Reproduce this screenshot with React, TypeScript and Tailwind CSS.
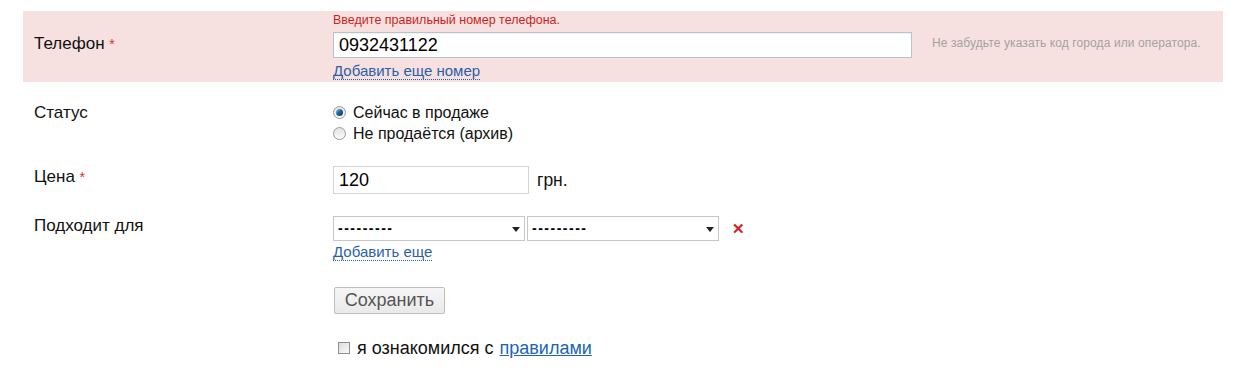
import React from "react";

function Radio({ checked }: { checked?: boolean }) {
  return (
    <span className="relative inline-flex h-[13px] w-[13px] shrink-0 items-center justify-center rounded-full border border-[#9a9a9a] bg-gradient-to-b from-[#e2e2e2] to-[#fbfbfb]">
      {checked && (
        <span className="h-[7px] w-[7px] rounded-full bg-gradient-to-br from-[#7fc4f0] via-[#1d5f95] to-[#0d3d66]" />
      )}
    </span>
  );
}

function Select() {
  return (
    <div className="relative flex h-[25px] w-[192px] items-center border border-[#c6c6c6] bg-white pl-[4px] text-[14px] font-bold text-black">
      <span className="tracking-[1.5px]">---------</span>
      <svg className="absolute right-[4px] top-[10px]" width="8" height="5" viewBox="0 0 8 5">
        <path d="M0 0 L8 0 L4 5 Z" fill="#222" />
      </svg>
    </div>
  );
}

export default function App() {
  return (
    <div
      className="min-h-[388px] w-[1239px] bg-white px-[16px] pt-[11px] text-[#111]"
      style={{ fontFamily: '"Liberation Sans", Arial, sans-serif' }}
    >
      {/* Phone row */}
      <div className="ml-[7px] flex w-[1200px] bg-[#f6e0e0] pb-[1px] pt-[1px]">
        <div className="w-[310px] shrink-0 pl-[11px] pt-[22px] text-[17px] leading-[20px]">
          Телефон <span className="text-[14px] text-[#d83030]">*</span>
        </div>
        <div className="flex flex-col">
          <div className="text-[12.5px] leading-[16px] text-[#cc1f1f]">
            Введите правильный номер телефона.
          </div>
          <div className="mt-[4px] flex h-[26px] w-[579px] items-center border border-[#b9c3cf] bg-white pl-[5px] text-[18px] leading-none text-black shadow-[inset_0_1px_1px_rgba(0,0,0,0.06)]">
            0932431122
          </div>
          <div className="mt-[3px] text-[15px] leading-[20px]">
            <span className="border-b border-dotted border-[#2c5fa8] text-[#2c5fa8]">
              Добавить еще номер
            </span>
          </div>
        </div>
        <div className="pl-[20px] pt-[23px] text-[12px] leading-[16px] tracking-[0.1px] text-[#a3a3a3]">
          Не забудьте указать код города или оператора.
        </div>
      </div>

      {/* Status row */}
      <div className="ml-[7px] flex pt-[20px]">
        <div className="w-[310px] shrink-0 pl-[11px] text-[17px] leading-[21px]">Статус</div>
        <div className="flex flex-col text-[16px] leading-[21px] text-[#111]">
          <label className="flex items-center gap-[7px]">
            <Radio checked />
            Сейчас в продаже
          </label>
          <label className="flex items-center gap-[7px]">
            <Radio />
            Не продаётся (архив)
          </label>
        </div>
      </div>

      {/* Price row */}
      <div className="ml-[7px] flex pt-[22px]">
        <div className="w-[310px] shrink-0 pl-[11px] pt-[1px] text-[17px] leading-[20px]">
          Цена <span className="text-[14px] text-[#d83030]">*</span>
        </div>
        <div className="flex items-center">
          <div className="flex h-[28px] w-[196px] items-center border border-[#d4d4d4] bg-white pl-[5px] text-[18px] leading-none text-black">
            120
          </div>
          <span className="ml-[8px] text-[17.5px]">грн.</span>
        </div>
      </div>

      {/* Suitable for row */}
      <div className="ml-[7px] flex pt-[22px]">
        <div className="w-[310px] shrink-0 pl-[11px] text-[17px] leading-[20px]">Подходит для</div>
        <div className="flex flex-col">
          <div className="flex items-center gap-[2px]">
            <Select />
            <Select />
            <span className="ml-[11px] text-[15px] font-bold leading-none text-[#d42020]">✕</span>
          </div>
          <div className="mt-[1px] text-[15px] leading-[20px]">
            <span className="border-b border-dotted border-[#2c5fa8] text-[#2c5fa8]">Добавить еще</span>
          </div>
          <button className="ml-[1px] mt-[25px] flex h-[27px] w-[111px] items-center justify-center rounded-[2px] border border-[#bdbdbd] bg-gradient-to-b from-[#f6f6f6] to-[#e9e9e9] text-[18px] text-[#555]">
            Сохранить
          </button>
          <div className="mt-[24px] flex items-center text-[18px] leading-[20px]">
            <span className="ml-[5px] mr-[7px] h-[12px] w-[12px] border border-[#8e8e8e] bg-gradient-to-br from-[#dcdcdc] to-[#f9f9f9]" />
            <span>я ознакомился с</span>
            <span className="ml-[6px] text-[#1c64b4] underline">правилами</span>
          </div>
        </div>
      </div>
    </div>
  );
}
